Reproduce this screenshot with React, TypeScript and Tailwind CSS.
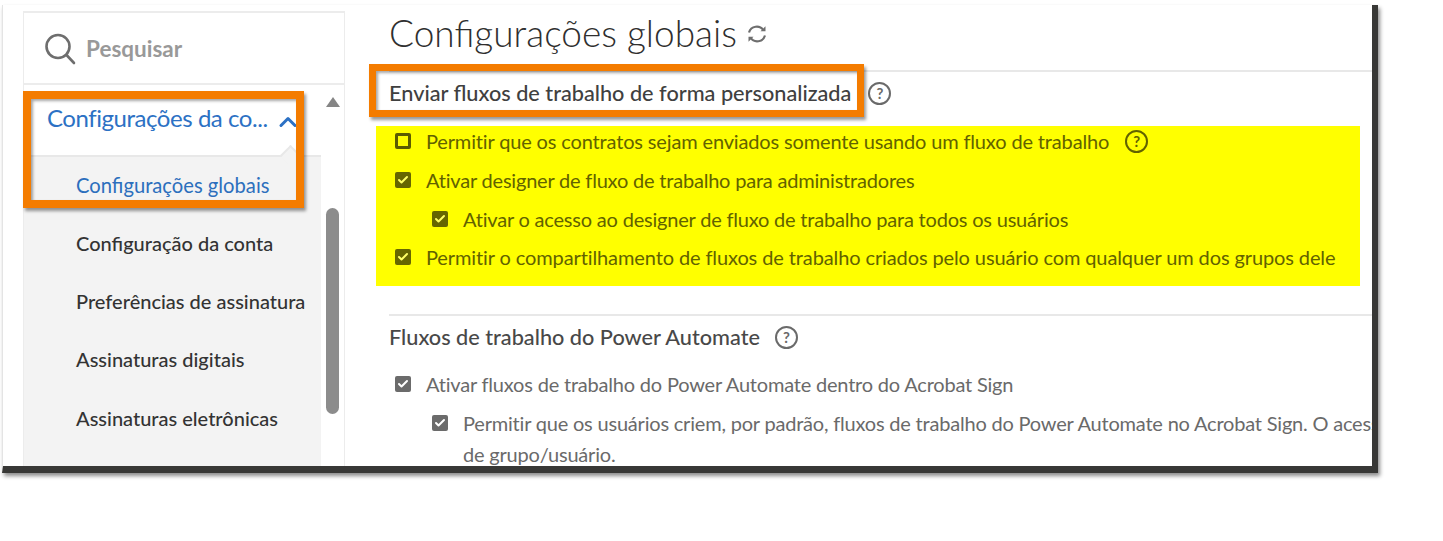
import { Check, ChevronUp } from 'lucide-react'

const font = { fontFamily: '"Lato", "Noto Sans", sans-serif' }

/** ajuda (?) */
function Help({ className = '' }: { className?: string }) {
  return (
    <span className={`inline-flex h-[23px] w-[23px] shrink-0 items-center justify-center rounded-full border-2 text-[15px] font-bold leading-none ${className}`}>
      ?
    </span>
  )
}

function Box({ checked = true, tone }: { checked?: boolean; tone: 'olive' | 'gray' }) {
  if (!checked) {
    return <span className="h-4 w-4 shrink-0 rounded-[2px] border-[3px] border-[#5c5c00]" />
  }
  return (
    <span className={`flex h-4 w-4 shrink-0 items-center justify-center rounded-[2px] ${tone === 'olive' ? 'bg-[#666600]' : 'bg-[#6b6b6b]'}`}>
      <Check className={tone === 'olive' ? 'h-3 w-3 text-[#ffff66]' : 'h-3 w-3 text-white'} strokeWidth={4} />
    </span>
  )
}

function Row({ label, tone, checked, indent, help, track = 'tracking-[-0.2px]' }: { label: string; tone: 'olive' | 'gray'; checked?: boolean; indent?: boolean; help?: boolean; track?: string }) {
  return (
    <div className={`flex h-[38.7px] shrink-0 items-center gap-[15px] whitespace-nowrap text-[20px] ${track} ${indent ? 'pl-[37px]' : ''} ${tone === 'olive' ? 'text-[#626200]' : 'text-[#6a6a6a]'}`}>
      <Box checked={checked} tone={tone} />
      <span>{label}</span>
      {help && <Help className="ml-[1px] border-[#626200] text-[#626200]" />}
    </div>
  )
}

function Sidebar() {
  const items = ['Configuração da conta', 'Preferências de assinatura', 'Assinaturas digitais', 'Assinaturas eletrônicas']
  return (
    <aside className="mt-[6px] flex w-[322px] shrink-0 flex-col self-stretch overflow-hidden border-x border-t-2 border-[#ececec] bg-white">
      <div className="flex h-[72px] shrink-0 items-center gap-[10px] border-b-2 border-[#ececec] pl-[20px] pt-[2px]">
        <svg width="32" height="32" viewBox="0 0 32 32" fill="none" stroke="#6e6e6e" strokeWidth="2.6" strokeLinecap="round">
          <circle cx="14" cy="13.5" r="11.5" />
          <path d="M22.5 22l7.5 8" />
        </svg>
        <span className="text-[22.5px] font-bold text-[#999999]">Pesquisar</span>
      </div>
      <div className="flex min-h-0 flex-1">
        <div className="w-[297px] shrink-0">
          <div className="relative flex h-[72px] items-start border-b-2 border-[#e8e8e8] pl-[23px] pt-[16px] text-[24px] leading-[34px] tracking-[-0.45px] text-[#2c71c4]">
            <span className="whitespace-nowrap">Configurações da co...</span>
            <ChevronUp className="absolute left-[250px] top-[23px] h-[28px] w-[28px]" strokeWidth={2.6} />
            <span className="absolute left-[259px] top-[63px] h-[15px] w-[15px] rotate-45 border-l-2 border-t-2 border-[#e8e8e8] bg-[#f3f3f3]" />
          </div>
          <div className="h-full bg-[#f3f3f3] pl-[52px] text-[20px]">
            <div className="flex h-[56.5px] items-center whitespace-nowrap text-[20.2px] text-[#2c6fbd]">Configurações globais</div>
            {items.map((item) => (
              <div key={item} className="flex h-[58.3px] items-center whitespace-nowrap font-medium text-[#333333]">{item}</div>
            ))}
          </div>
        </div>
        <div className="flex flex-1 flex-col items-center pt-[12px]">
          <span className="h-0 w-0 border-x-[7px] border-b-[10px] border-x-transparent border-b-[#858585]" />
          <span className="mt-[101px] h-[206px] w-[13px] shrink-0 rounded-full bg-[#8c8c8c]" />
        </div>
      </div>
    </aside>
  )
}

export default function App() {
  return (
    <div className="h-[541px] w-[1443px] overflow-hidden bg-white" style={font}>
      <div className="relative ml-[2px] mt-[5px] flex h-[468px] w-[1376px] border-b-[7px] border-l border-r-[6px] border-b-[#383836] border-l-[#e4e4e4] border-r-[#383836] bg-white pl-[20px] shadow-[2px_3px_4px_rgba(0,0,0,0.45)]">
        <Sidebar />
        <main className="min-w-0 flex-1 overflow-hidden pl-[44px]">
          <div className="flex h-[65px] items-center gap-[9px] pb-[10px]">
            <h1 className="text-[37px] font-light leading-none text-[#2f2f2f]">Configurações globais</h1>
            <svg width="22" height="22" viewBox="0 0 22 22" fill="none" stroke="#6e6e6e" strokeWidth="2.2" className="mt-[3px]">
              <path d="M3 9.5a8 8 0 0 1 14.5-2" />
              <path d="M19 12.5a8 8 0 0 1-14.5 2" />
              <path d="M14.5 8.2h5v-5z" fill="#6e6e6e" stroke="none" />
              <path d="M7.5 13.8h-5v5z" fill="#6e6e6e" stroke="none" />
            </svg>
          </div>
          <div className="flex h-[45px] items-center gap-[17px] border-t-2 border-[#e8e8e8] text-[21.7px] font-medium text-[#404040]">
            <span className="whitespace-nowrap">Enviar fluxos de trabalho de forma personalizada</span>
            <Help className="border-[#6a6a6a] text-[#6a6a6a]" />
          </div>
          <div className="-ml-[13px] mr-[12px] mt-[11px] flex h-[160px] flex-col bg-[#ffff00] px-[19px]">
            <div className="-mt-[4px]">
              <Row tone="olive" checked={false} help label="Permitir que os contratos sejam enviados somente usando um fluxo de trabalho" track="tracking-[-0.15px]" />
              <Row tone="olive" label="Ativar designer de fluxo de trabalho para administradores" />
              <Row tone="olive" indent label="Ativar o acesso ao designer de fluxo de trabalho para todos os usuários" />
              <Row tone="olive" label="Permitir o compartilhamento de fluxos de trabalho criados pelo usuário com qualquer um dos grupos dele" track="tracking-[-0.11px]" />
            </div>
          </div>
          <div className="mt-[28px] flex h-[44px] items-center gap-[15px] border-t-2 border-[#e8e8e8] text-[21.7px] font-medium text-[#484848]">
            <span className="whitespace-nowrap">Fluxos de trabalho do Power Automate</span>
            <Help className="border-[#6a6a6a] text-[#6a6a6a]" />
          </div>
          <div className="px-[6px] pt-[7px]">
            <Row tone="gray" label="Ativar fluxos de trabalho do Power Automate dentro do Acrobat Sign" />
            <Row tone="gray" indent label="Permitir que os usuários criem, por padrão, fluxos de trabalho do Power Automate no Acrobat Sign. O acesso" />
            <div className="whitespace-nowrap pl-[68px] text-[20px] leading-[24px] tracking-[-0.2px] text-[#6a6a6a]">de grupo/usuário.</div>
          </div>
        </main>
        <div className="pointer-events-none absolute left-[20px] top-[86px] h-[117px] w-[281px] border-[8px] border-[#f47c00] shadow-[2px_3px_3px_rgba(0,0,0,0.4),inset_2px_2px_3px_rgba(0,0,0,0.35)]" />
        <div className="pointer-events-none absolute left-[366px] top-[59px] h-[53px] w-[495px] border-[7px] border-[#f47c00] shadow-[2px_3px_3px_rgba(0,0,0,0.4),inset_2px_2px_3px_rgba(0,0,0,0.35)]" />
      </div>
    </div>
  )
}
